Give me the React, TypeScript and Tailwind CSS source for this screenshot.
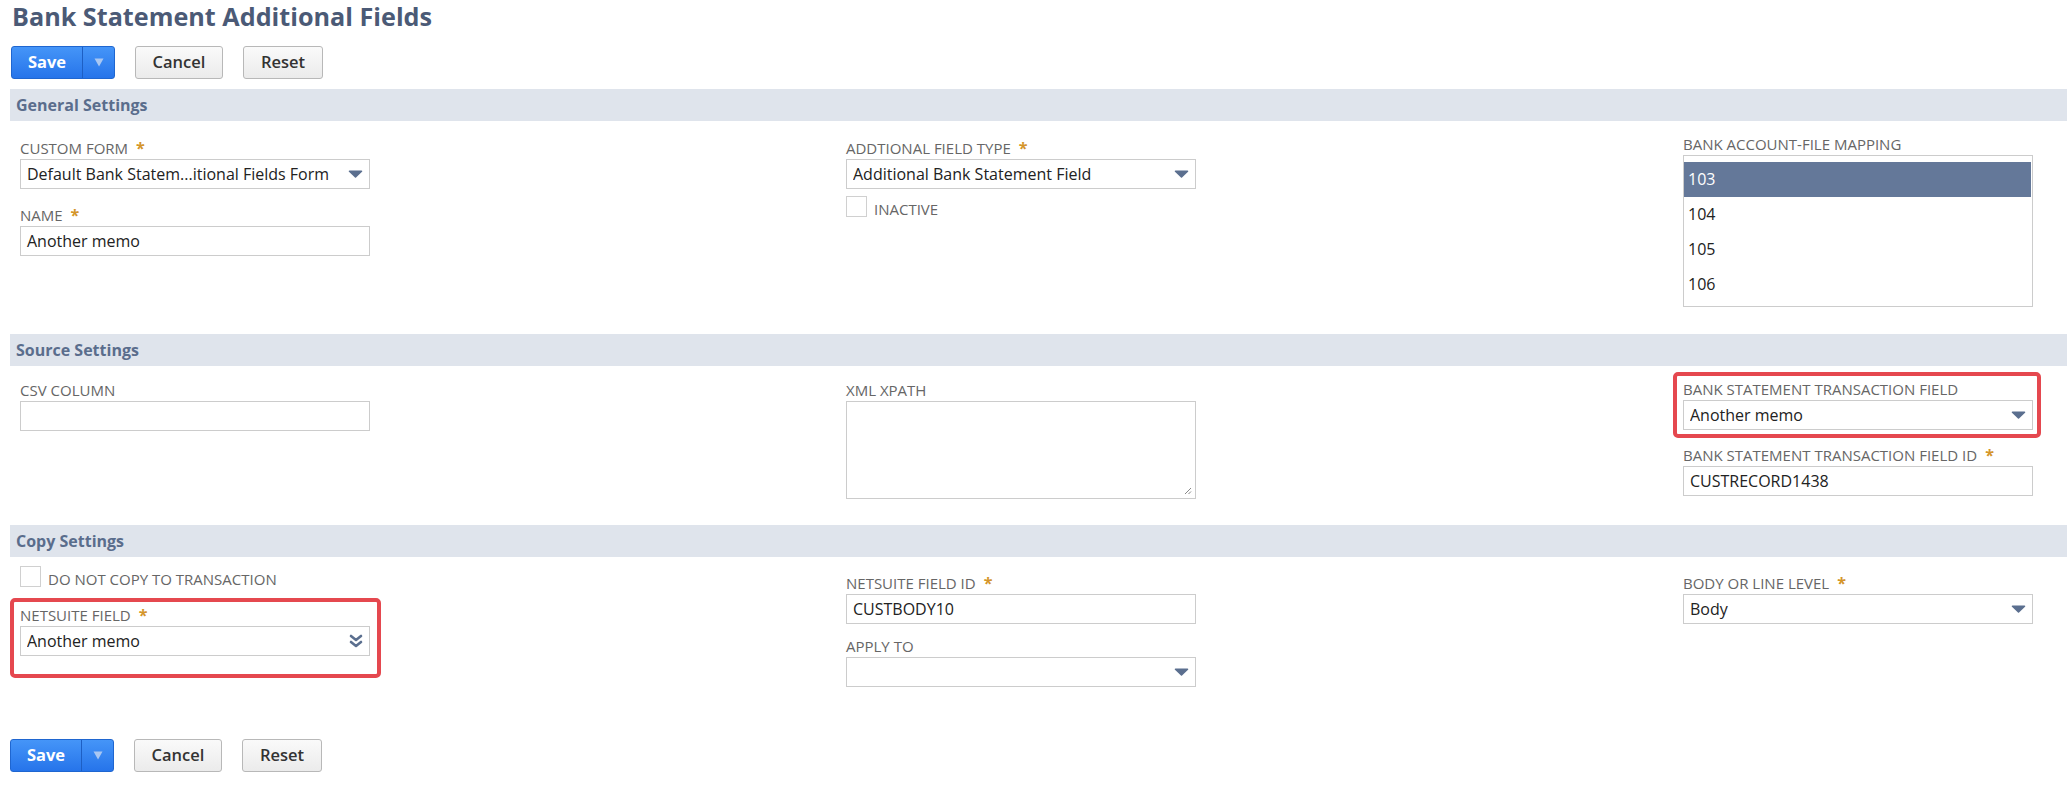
import React from "react";

const Star = () => (
  <span className="ml-[8px] text-[16px] font-bold text-[#d4952a]">*</span>
);

function Label({ text, required }: { text: string; required?: boolean }) {
  return (
    <div className="h-[20px] whitespace-nowrap text-[15px] leading-[19px] text-[#666666] uppercase">
      {text}
      {required && <Star />}
    </div>
  );
}

const DownArrow = () => (
  <svg width="15" height="8" viewBox="0 0 15 8" className="shrink-0">
    <path
      d="M1.5 1.2 H13.5 L7.5 6.8 Z"
      fill="#5b6f8f"
      stroke="#5b6f8f"
      strokeWidth="1.6"
      strokeLinejoin="round"
    />
  </svg>
);

const DoubleChevron = () => (
  <svg width="14" height="15" viewBox="0 0 14 15" className="shrink-0">
    <path
      d="M2 2 L7 6 L12 2 M2 8 L7 12 L12 8"
      fill="none"
      stroke="#5b6f8f"
      strokeWidth="2.6"
      strokeLinecap="round"
      strokeLinejoin="round"
    />
  </svg>
);

function SelectBox({ value, multi }: { value?: string; multi?: boolean }) {
  return (
    <div className="flex h-[30px] w-[350px] items-center border border-[#cccccc] bg-white pl-[6px] pr-[6px] text-[16px] text-[#222222]">
      <span className="flex-1 truncate">{value}</span>
      {multi ? <DoubleChevron /> : <DownArrow />}
    </div>
  );
}

function TextBox({ value }: { value?: string }) {
  return (
    <div className="flex h-[30px] w-[350px] items-center border border-[#cccccc] bg-white pl-[6px] text-[16px] text-[#222222]">
      {value}
    </div>
  );
}

function CheckRow({ text }: { text: string }) {
  return (
    <div className="flex items-end gap-[7px]">
      <div className="h-[21px] w-[21px] border border-[#d0d0d0] bg-white" />
      <span className="text-[15px] leading-[15px] text-[#666666] uppercase">{text}</span>
    </div>
  );
}

function SectionBar({ title }: { title: string }) {
  return (
    <div className="ml-[10px] flex h-[32px] items-center bg-[#dfe4ec] pl-[6px] text-[16px] font-bold text-[#5a6d8c]">
      {title}
    </div>
  );
}

function ButtonRow() {
  return (
    <div className="flex items-center">
      <div className="flex h-[33px] overflow-hidden rounded-[3px] border border-[#1f66d0] bg-gradient-to-b from-[#4595f8] to-[#2674ea]">
        <div className="flex w-[70px] items-center justify-center text-[16.5px] font-bold text-white">
          Save
        </div>
        <div className="flex w-[32px] items-center justify-center border-l border-[#1d5fc4]">
          <svg width="10" height="9" viewBox="0 0 10 9">
            <path d="M0.5 0.5 H9.5 L5 8.5 Z" fill="#a9c7f2" />
          </svg>
        </div>
      </div>
      <div className="ml-[20px] flex h-[33px] w-[88px] items-center justify-center rounded-[3px] border border-[#b8b8b8] bg-gradient-to-b from-[#fafafa] to-[#ebebeb] text-[16.5px] font-semibold text-[#333333]">
        Cancel
      </div>
      <div className="ml-[20px] flex h-[33px] w-[80px] items-center justify-center rounded-[3px] border border-[#b8b8b8] bg-gradient-to-b from-[#fafafa] to-[#ebebeb] text-[16.5px] font-semibold text-[#333333]">
        Reset
      </div>
    </div>
  );
}

const mappings = ["103", "104", "105", "106"];

export default function App() {
  return (
    <div className="min-h-[801px] w-full bg-white font-['Open_Sans','Noto_Sans',sans-serif]">
      <h1 className="pl-[12px] text-[25.2px] leading-[32px] font-bold text-[#4b5a76]">
        Bank Statement Additional Fields
      </h1>

      <div className="mt-[14px] pl-[11px]">
        <ButtonRow />
      </div>

      {/* General Settings */}
      <div className="mt-[10px]">
        <SectionBar title="General Settings" />
        <div className="grid grid-cols-[826px_837px_1fr] items-start pt-[14px] pb-[27px] pl-[20px]">
          <div className="mt-[4px]">
            <Label text="Custom Form" required />
            <SelectBox value="Default Bank Statem...itional Fields Form" />
            <div className="mt-[17px]">
              <Label text="Name" required />
              <TextBox value="Another memo" />
            </div>
          </div>
          <div className="mt-[4px]">
            <Label text="Addtional Field Type" required />
            <SelectBox value="Additional Bank Statement Field" />
            <div className="mt-[7px]">
              <CheckRow text="Inactive" />
            </div>
          </div>
          <div>
            <Label text="Bank Account-File Mapping" />
            <div className="w-[350px] border border-[#cccccc] bg-white pt-[6px] pr-[1px] pb-[4px]">
              {mappings.map((m, i) => (
                <div
                  key={m}
                  className={
                    i === 0
                      ? "h-[35px] bg-[#647899] pl-[4px] text-[16px] leading-[35px] text-white"
                      : "h-[35px] pl-[4px] text-[16px] leading-[35px] text-[#222222]"
                  }
                >
                  {m}
                </div>
              ))}
            </div>
          </div>
        </div>
      </div>

      {/* Source Settings */}
      <div>
        <SectionBar title="Source Settings" />
        <div className="grid grid-cols-[826px_837px_1fr] items-start pt-[6px] pb-[26px] pl-[20px]">
          <div className="mt-[9px]">
            <Label text="CSV Column" />
            <TextBox />
          </div>
          <div className="mt-[9px]">
            <Label text="XML XPath" />
            <div className="relative h-[98px] w-[350px] border border-[#cccccc] bg-white">
              <svg
                width="8"
                height="8"
                viewBox="0 0 8 8"
                className="absolute right-[3px] bottom-[3px]"
              >
                <path d="M7 1 L1 7 M7 4.5 L4.5 7" stroke="#888888" strokeWidth="1" />
              </svg>
            </div>
          </div>
          <div>
            <div className="ml-[-10px] w-[368px] rounded-[5px] border-4 border-[#e5484f] pt-[4px] pr-[4px] pb-[4px] pl-[6px]">
              <Label text="Bank Statement Transaction Field" />
              <SelectBox value="Another memo" />
            </div>
            <div className="mt-[8px]">
              <Label text="Bank Statement Transaction Field ID" required />
              <TextBox value="CUSTRECORD1438" />
            </div>
          </div>
        </div>
      </div>

      {/* Copy Settings */}
      <div>
        <SectionBar title="Copy Settings" />
        <div className="grid grid-cols-[826px_837px_1fr] items-start pt-[9px] pl-[20px]">
          <div>
            <CheckRow text="Do Not Copy To Transaction" />
            <div className="mt-[11px] ml-[-10px] w-[371px] rounded-[5px] border-4 border-[#e5484f] pt-[4px] pr-[7px] pb-[18px] pl-[6px]">
              <Label text="NetSuite Field" required />
              <SelectBox value="Another memo" multi />
            </div>
          </div>
          <div className="mt-[8px]">
            <Label text="NetSuite Field ID" required />
            <TextBox value="CUSTBODY10" />
            <div className="mt-[13px]">
              <Label text="Apply To" />
              <SelectBox />
            </div>
          </div>
          <div className="mt-[8px]">
            <Label text="Body or Line Level" required />
            <SelectBox value="Body" />
          </div>
        </div>
      </div>

      <div className="mt-[52px] pl-[10px]">
        <ButtonRow />
      </div>
    </div>
  );
}
